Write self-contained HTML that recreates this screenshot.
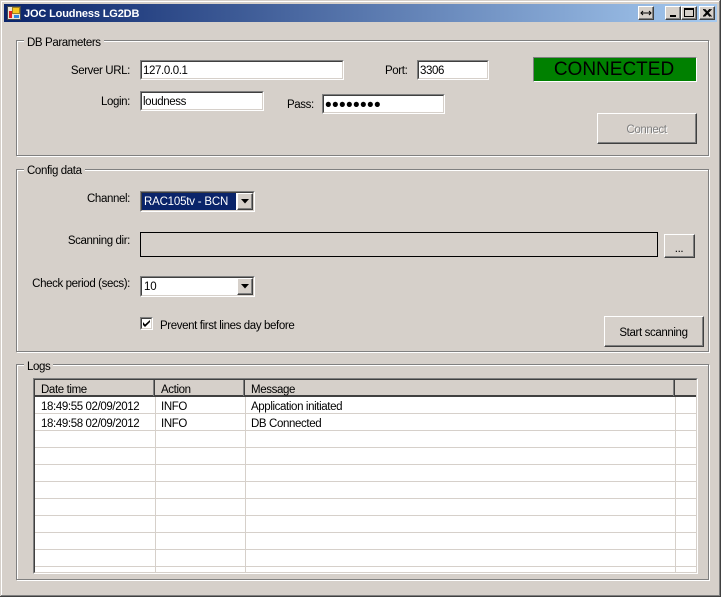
<!DOCTYPE html>
<html><head><meta charset="utf-8"><style>
html,body{margin:0;padding:0;background:#d6d0ca}
#w{position:relative;width:721px;height:597px;overflow:hidden;background:#d6d0ca;font-family:"Liberation Sans",sans-serif;font-size:11.500px;letter-spacing:-.38px;color:#000}
#w div,#w svg{position:absolute;box-sizing:border-box}
.t{white-space:nowrap;line-height:14px;height:14px;margin-top:1px}
.r{text-align:right;left:0;width:130px}
.g{border:1px solid #808080;box-shadow:1px 1px 0 #fff,inset 1px 1px 0 #fff}
.leg{background:#d6d0ca;padding:0 3px;height:14px;line-height:14px;white-space:nowrap;margin-top:1px}
.in{background:#fff;border-style:solid;border-width:1px;border-color:#808080 #fff #fff #808080}
.in>i{display:block;position:absolute;left:0;top:0;right:0;bottom:0;border-style:solid;border-width:1px;border-color:#404040 #d6d0ca #d6d0ca #404040}
.btn{background:#d6d0ca;border-style:solid;border-width:1px;border-color:#fff #404040 #404040 #fff;text-align:center;box-shadow:inset -1px -1px 0 #808080}
.sb{background:#d6d0ca;border-style:solid;border-width:1px;border-color:#fff #404040 #404040 #fff;box-shadow:inset -1px -1px 0 #808080}
.h{left:35px;width:661px;height:1px;background:#d6d0ca}
.v{top:397px;height:176px;width:1px;background:#d6d0ca}
</style></head><body><div id="w">
<!-- window frame -->
<div style="left:1px;top:1px;width:718px;height:594px;border-left:1px solid #fff;border-top:1px solid #fff"></div>
<div style="left:719px;top:1px;width:1px;height:595px;background:#808080"></div>
<div style="left:720px;top:0;width:1px;height:597px;background:#404040"></div>
<div style="left:1px;top:595px;width:719px;height:1px;background:#808080"></div>
<div style="left:0;top:596px;width:721px;height:1px;background:#404040"></div>
<div style="left:4px;top:4px;width:713px;height:18px;background:linear-gradient(90deg,#0a246a,#a6caf0)"></div>
<svg style="left:7px;top:6px" width="14" height="14" viewBox="0 0 14 14"><rect x=".5" y=".5" width="13" height="13" fill="#e8e4d8" stroke="#404850"/><rect x="5.500" y="1.500" width="7" height="6" fill="#f8c820" stroke="#a08020"/><rect x="2" y="5" width="3" height="7" fill="#e02020"/><rect x="7" y="9" width="5" height="3" fill="#3088e0"/></svg>
<div class="t" style="left:24px;top:6px;color:#fff;font-weight:bold;font-size:11px;letter-spacing:-.15px">JOC Loudness LG2DB</div>
<div class="sb" style="left:638px;top:6px;width:16px;height:14px"><svg style="left:1px;top:2px" width="12" height="8" viewBox="0 0 12 8"><path d="M1 4H11M3 2L1 4L3 6M9 2L11 4L9 6" fill="none" stroke="#000"/></svg></div>
<div class="sb" style="left:665px;top:6px;width:16px;height:14px"><div style="left:4px;top:8px;width:6px;height:2px;background:#000"></div></div>
<div class="sb" style="left:681px;top:6px;width:16px;height:14px"><div style="left:2px;top:1px;width:10px;height:9px;border:1px solid #000;border-top-width:2px"></div></div>
<div class="sb" style="left:699px;top:6px;width:16px;height:14px"><svg style="left:3px;top:2px" width="9" height="8" viewBox="0 0 9 8"><path d="M0 0L7 7.500M1.500 0L8.500 7.500M7 0L0 7.500M8.500 0L1.500 7.500" stroke="#000" fill="none"/></svg></div>

<!-- DB Parameters -->
<div class="g" style="left:16px;top:40px;width:693px;height:116px"></div>
<div class="leg" style="left:24px;top:35px">DB Parameters</div>
<div class="t r" style="top:63px">Server URL:</div>
<div class="in" style="left:140px;top:60px;width:204px;height:20px"><i></i></div>
<div class="t" style="left:143px;top:63px">127.0.0.1</div>
<div class="t" style="left:385px;top:63px">Port:</div>
<div class="in" style="left:417px;top:60px;width:72px;height:20px"><i></i></div>
<div class="t" style="left:420px;top:63px">3306</div>
<div style="left:533px;top:57px;width:164px;height:25px;background:#008000;border:1px solid;border-color:#808080 #fff #fff #808080"></div>
<div class="t" style="left:533px;top:59px;width:162px;text-align:center;font-size:19px;letter-spacing:0;line-height:20px;height:20px">CONNECTED</div>
<div class="t r" style="top:94px">Login:</div>
<div class="in" style="left:140px;top:91px;width:124px;height:20px"><i></i></div>
<div class="t" style="left:143px;top:94px">loudness</div>
<div class="t" style="left:287px;top:97px">Pass:</div>
<div class="in" style="left:322px;top:94px;width:123px;height:20px"><i></i></div>
<div class="t" style="left:325px;top:98px;font-size:19px;letter-spacing:.35px">••••••••</div>
<div class="btn" style="left:597px;top:113px;width:100px;height:31px"></div>
<div class="t" style="left:598px;top:123px;width:99px;text-align:center;color:#fff">Connect</div>
<div class="t" style="left:597px;top:122px;width:99px;text-align:center;color:#808080">Connect</div>

<!-- Config data -->
<div class="g" style="left:16px;top:169px;width:693px;height:183px"></div>
<div class="leg" style="left:24px;top:163px">Config data</div>
<div class="t r" style="top:191px">Channel:</div>
<div class="in" style="left:140px;top:191px;width:115px;height:21px;"><i></i></div>
<div style="left:142px;top:193px;width:94px;height:17px;background:#0a246a"></div>
<div class="t" style="left:144px;top:194px;color:#fff;font-size:11.500px;letter-spacing:-.2px">RAC105tv - BCN</div>
<div class="sb" style="left:237px;top:193px;width:16px;height:17px"><svg style="left:3px;top:5px" width="8" height="5" viewBox="0 0 8 5"><path d="M0 0H8L4 4.500z" fill="#000"/></svg></div>
<div class="t r" style="top:233px">Scanning dir:</div>
<div style="left:140px;top:232px;width:518px;height:25px;border:1px solid #000"></div>
<div class="btn" style="left:664px;top:234px;width:31px;height:24px"></div>
<div class="t" style="left:664px;top:241px;width:30px;text-align:center">...</div>
<div class="t r" style="top:276px">Check period (secs):</div>
<div class="in" style="left:140px;top:276px;width:115px;height:21px"><i></i></div>
<div class="t" style="left:144px;top:279px;font-size:11.500px;letter-spacing:-.2px">10</div>
<div class="sb" style="left:237px;top:278px;width:16px;height:17px"><svg style="left:3px;top:5px" width="8" height="5" viewBox="0 0 8 5"><path d="M0 0H8L4 4.500z" fill="#000"/></svg></div>
<div class="in" style="left:140px;top:317px;width:13px;height:13px"><i></i></div>
<svg style="left:143px;top:320px" width="7" height="7" viewBox="0 0 7 7"><path d="M0 2V5L2 7L7 2V0L2 4.500z" fill="#000"/></svg>
<div class="t" style="left:160px;top:318px">Prevent first lines day before</div>
<div class="btn" style="left:604px;top:316px;width:100px;height:31px"></div>
<div class="t" style="left:604px;top:325px;width:99px;text-align:center">Start scanning</div>

<!-- Logs -->
<div class="g" style="left:16px;top:364px;width:693px;height:216px"></div>
<div class="leg" style="left:24px;top:359px">Logs</div>
<div class="in" style="left:33px;top:378px;width:665px;height:196px;background:#fff"><i></i></div>
<div style="left:35px;top:380px;width:661px;height:17px;background:#d6d0ca;border-bottom:2px solid #404040"></div>
<div style="left:153px;top:380px;width:1px;height:16px;background:#808080"></div><div style="left:154px;top:380px;width:1px;height:16px;background:#404040"></div>
<div style="left:243px;top:380px;width:1px;height:16px;background:#808080"></div><div style="left:244px;top:380px;width:1px;height:16px;background:#404040"></div>
<div style="left:673px;top:380px;width:1px;height:16px;background:#808080"></div><div style="left:674px;top:380px;width:1px;height:16px;background:#404040"></div>
<div class="t" style="left:41px;top:382px">Date time</div>
<div class="t" style="left:161px;top:382px">Action</div>
<div class="t" style="left:251px;top:382px">Message</div>
<div class="h" style="top:413px"></div><div class="h" style="top:430px"></div><div class="h" style="top:447px"></div><div class="h" style="top:464px"></div><div class="h" style="top:481px"></div><div class="h" style="top:498px"></div><div class="h" style="top:515px"></div><div class="h" style="top:532px"></div><div class="h" style="top:549px"></div><div class="h" style="top:566px"></div>
<div class="v" style="left:155px"></div><div class="v" style="left:245px"></div><div class="v" style="left:675px"></div>
<div class="t" style="left:41px;top:399px">18:49:55 02/09/2012</div>
<div class="t" style="left:161px;top:399px">INFO</div>
<div class="t" style="left:251px;top:399px">Application initiated</div>
<div class="t" style="left:41px;top:416px">18:49:58 02/09/2012</div>
<div class="t" style="left:161px;top:416px">INFO</div>
<div class="t" style="left:251px;top:416px">DB Connected</div>
</div></body></html>
